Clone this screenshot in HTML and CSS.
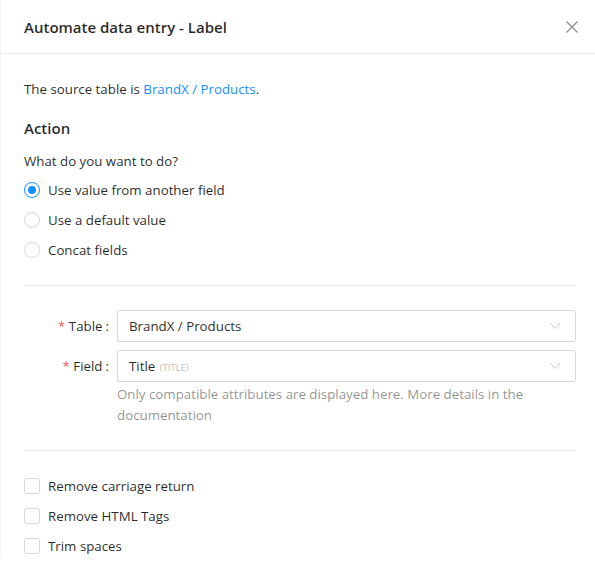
FILE: index.html
```html
<!DOCTYPE html>
<html lang="en">
<head>
    <meta charset="UTF-8">
    <meta name="viewport" content="width=device-width, initial-scale=1.0">
    <title>Automate data entry</title>
    <link rel="stylesheet" href="styles.css">
</head>
<body>
    <div class="modal">
        <!-- Шапка окна -->
        <div class="modal-header">
            <div class="modal-title">Automate data entry - Label</div>
            <button class="modal-close" aria-label="Close">
                <svg width="12" height="12" viewBox="0 0 12 12">
                    <path d="M0.5 0.5L11.5 11.5M11.5 0.5L0.5 11.5" stroke="#8c8c8c" stroke-width="1.2" fill="none"/>
                </svg>
            </button>
        </div>

        <div class="modal-body">
            <p class="source">The source table is <a href="#">BrandX / Products</a>.</p>

            <h3 class="section-title">Action</h3>
            <p class="question">What do you want to do?</p>

            <!-- Варианты действия -->
            <div class="radio-group">
                <label class="radio checked"><span class="radio-dot"></span>Use value from another field</label>
                <label class="radio"><span class="radio-dot"></span>Use a default value</label>
                <label class="radio"><span class="radio-dot"></span>Concat fields</label>
            </div>

            <div class="divider"></div>

            <!-- Поля формы -->
            <div class="form-row">
                <div class="form-label"><span class="req">*</span>Table<span class="colon">:</span></div>
                <div class="form-control">
                    <div class="select">
                        <span class="select-value">BrandX / Products</span>
                        <svg class="select-arrow" width="12" height="8" viewBox="0 0 12 8">
                            <path d="M1 1L6 6.5L11 1" stroke="#c8c8c8" stroke-width="1" fill="none"/>
                        </svg>
                    </div>
                </div>
            </div>

            <div class="form-row">
                <div class="form-label"><span class="req">*</span>Field<span class="colon">:</span></div>
                <div class="form-control">
                    <div class="select">
                        <span class="select-value">Title <span class="select-code">(TITLE)</span></span>
                        <svg class="select-arrow" width="12" height="8" viewBox="0 0 12 8">
                            <path d="M1 1L6 6.5L11 1" stroke="#c8c8c8" stroke-width="1" fill="none"/>
                        </svg>
                    </div>
                    <div class="help">Only compatible attributes are displayed here. More details in the documentation</div>
                </div>
            </div>

            <div class="divider bottom"></div>

            <!-- Дополнительные опции -->
            <div class="checkbox-group">
                <label class="checkbox"><span class="box"></span>Remove carriage return</label>
                <label class="checkbox"><span class="box"></span>Remove HTML Tags</label>
                <label class="checkbox"><span class="box"></span>Trim spaces</label>
            </div>
        </div>
    </div>
</body>
</html>
```

FILE: styles.css
```css
/* Общие стили */
* {
    margin: 0;
    padding: 0;
    box-sizing: border-box;
}

body {
    font-family: "Open Sans", "Noto Sans", sans-serif;
    font-size: 13.3px;
    color: rgba(0, 0, 0, 0.85);
    background-color: #FFFFFF;
    overflow: hidden;
}

.modal {
    width: 595px;
    background: #FFFFFF;
    border-left: 1px solid #f3f3f3;
}

/* Шапка */
.modal-header {
    display: flex;
    align-items: center;
    justify-content: space-between;
    height: 54px;
    padding: 0 17px 0 23px;
    border-bottom: 1px solid #ebebeb;
}

.modal-title {
    font-size: 15px;
    font-weight: 600;
    color: rgba(0, 0, 0, 0.85);
}

.modal-close {
    background: none;
    border: none;
    width: 12px;
    height: 12px;
    cursor: pointer;
    display: flex;
}

/* Тело окна */
.modal-body {
    padding: 24px 19px 0 23px;
}

.source {
    line-height: 22px;
}

.source a {
    color: #1890ff;
    text-decoration: none;
}

.section-title {
    font-size: 15px;
    font-weight: 600;
    line-height: 24px;
    margin-top: 16px;
}

.question {
    line-height: 22px;
    margin-top: 10px;
}

/* Радио-кнопки */
.radio-group {
    display: flex;
    flex-direction: column;
    gap: 8px;
    margin-top: 7px;
}

.radio,
.checkbox {
    display: flex;
    align-items: center;
    line-height: 22px;
    cursor: pointer;
}

.radio-dot {
    position: relative;
    width: 16px;
    height: 16px;
    border: 1px solid #d9d9d9;
    border-radius: 50%;
    margin-right: 8px;
}

.radio.checked .radio-dot {
    border-color: #1890ff;
}

.radio.checked .radio-dot::after {
    content: "";
    position: absolute;
    top: 3px;
    left: 3px;
    width: 8px;
    height: 8px;
    border-radius: 50%;
    background: #1890ff;
}

.divider {
    height: 1px;
    background: #ebebeb;
    margin: 24px 0 24px;
}

.divider.bottom {
    margin: 24px 0 24px;
}

/* Строки формы */
.form-row {
    display: flex;
    margin-bottom: 8px;
}

.form-label {
    width: 93px;
    height: 32px;
    display: flex;
    align-items: center;
    justify-content: flex-end;
}

.req {
    color: #ff4d4f;
    margin-right: 4px;
    font-size: 12px;
}

.colon {
    margin: 0 8px 0 3px;
}

.form-control {
    flex: 1;
}

.select {
    display: flex;
    align-items: center;
    justify-content: space-between;
    height: 32px;
    padding: 0 11px;
    border: 1px solid #d9d9d9;
    border-radius: 2px;
}

.select-code {
    font-size: 9.5px;
    color: #bfbfbf;
    margin-left: 1px;
}

.select-arrow {
    margin-right: 3px;
}

.help {
    color: rgba(0, 0, 0, 0.45);
    line-height: 21px;
    margin-top: 2px;
    padding-right: 30px;
}

/* Чекбоксы */
.checkbox-group {
    display: flex;
    flex-direction: column;
    gap: 8px;
}

.box {
    width: 16px;
    height: 16px;
    border: 1px solid #d9d9d9;
    border-radius: 2px;
    margin-right: 8px;
}
```
